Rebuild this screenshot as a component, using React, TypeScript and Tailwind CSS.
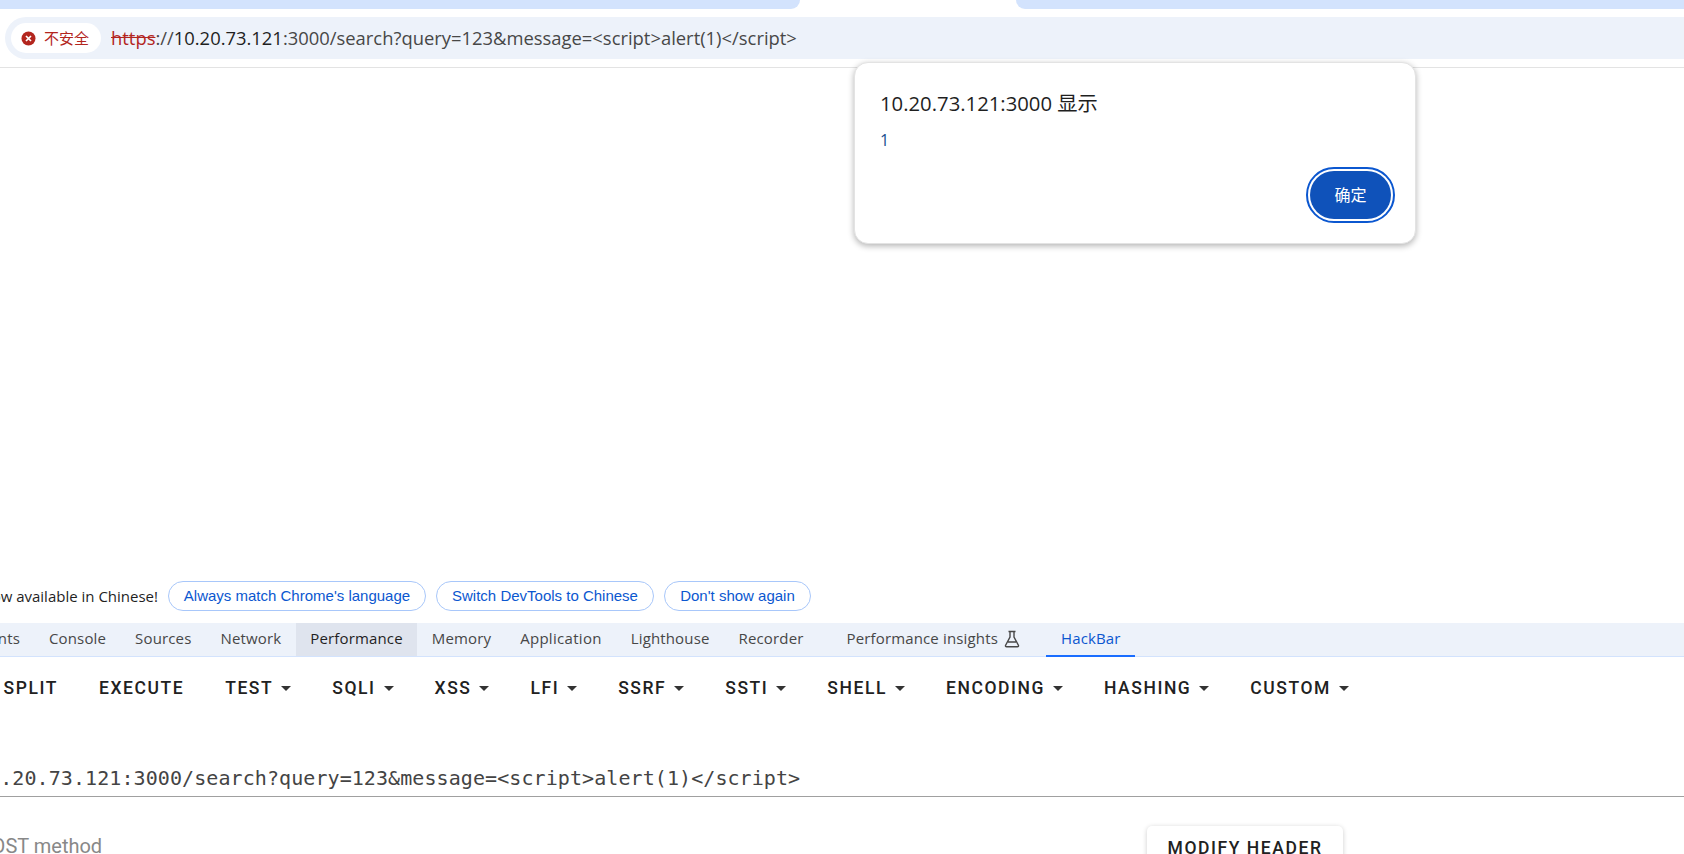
const devtoolsTabs = ["Console", "Sources", "Network", "Performance", "Memory", "Application", "Lighthouse", "Recorder"];

const hackbarMenus = ["TEST", "SQLI", "XSS", "LFI", "SSRF", "SSTI", "SHELL", "ENCODING", "HASHING", "CUSTOM"];

function Caret() {
  return <span className="ml-2 mr-px h-0 w-0 border-x-[5px] border-t-[5px] border-x-transparent border-t-[#333]" />;
}

function FlaskIcon() {
  return (
    <svg width="16" height="18" viewBox="0 0 16 18" fill="none" stroke="#474747" strokeWidth="1.4" className="ml-[6px]">
      <path d="M4.5 1.5h7M6 1.5v5.5L1.6 15.2c-.4.8.1 1.6 1 1.6h10.8c.9 0 1.4-.8 1-1.6L10 7V1.5M4 12h8" />
    </svg>
  );
}

export default function App() {
  return (
    <div className="flex h-[854px] w-[1684px] flex-col overflow-hidden bg-white font-['Open_Sans','Noto_Sans_CJK_SC',sans-serif]">
      {/* tab strip */}
      <div className="flex h-[9px] shrink-0 justify-between">
        <div className="h-full w-[800px] rounded-br-[10px] bg-[#d3e3fd]" />
        <div className="h-full w-[668px] rounded-bl-[10px] bg-[#d3e3fd]" />
      </div>

      {/* address bar */}
      <div className="mt-2 ml-[5px] flex h-[42px] shrink-0 items-center rounded-l-full bg-[#edf2fa] pl-[6px]">
        <div className="flex h-[30px] w-[90px] items-center rounded-full bg-white pl-[10px] text-[#b3261e]">
          <svg width="15" height="15" viewBox="0 0 15 15">
            <circle cx="7.5" cy="7.5" r="7" fill="#b3261e" />
            <path d="M5 5l5 5M10 5l-5 5" stroke="#fff" strokeWidth="1.7" />
          </svg>
          <span className="ml-2 text-[15px]">不安全</span>
        </div>
        <div className="ml-[10px] whitespace-nowrap text-[18.4px] text-[#474747]">
          <span className="text-[#b3261e] line-through">https</span>
          <span>:</span>
          <span>//</span>
          <span className="text-[#1f1f1f]">10.20.73.121</span>
          <span>:3000/search?query=123&amp;message=&lt;script&gt;alert(1)&lt;/script&gt;</span>
        </div>
      </div>
      <div className="mt-2 h-px shrink-0 bg-[#e3e3e3]" />

      {/* page */}
      <div className="h-[513px] shrink-0" />

      {/* language infobar */}
      <div className="flex h-[30px] shrink-0 items-center">
        <div className="flex w-[158px] justify-end overflow-hidden whitespace-nowrap text-[15px] text-[#1f1f1f]">
          DevTools is now available in Chinese!
        </div>
        <div className="ml-[10px] flex gap-[10px] font-['Liberation_Sans',sans-serif] text-[15px] text-[#0b57d0]">
          <button className="flex h-[30px] w-[258px] items-center justify-center rounded-full border border-[#a8c7fa]">Always match Chrome's language</button>
          <button className="flex h-[30px] w-[218px] items-center justify-center rounded-full border border-[#a8c7fa]">Switch DevTools to Chinese</button>
          <button className="flex h-[30px] w-[147px] items-center justify-center rounded-full border border-[#a8c7fa]">Don't show again</button>
        </div>
      </div>

      {/* devtools tabs */}
      <div className="mt-3 flex h-[34px] shrink-0 items-stretch border-b border-[#d3e3fd] bg-[#edf2fa] pb-[2px] text-[15px] tracking-[0.15px] text-[#474747]">
        <div className="flex w-[34.5px] items-center justify-end overflow-hidden whitespace-nowrap pr-[14.5px]">Elements</div>
        {devtoolsTabs.map((tab) => (
          <div
            key={tab}
            className={
              tab === "Performance"
                ? "-mb-[2px] flex items-center bg-[#dfe4ee] px-[14.5px] pb-[2px] text-[#1f1f1f]"
                : tab === "Application"
                  ? "flex items-center px-[14.5px] tracking-[0.3px]"
                  : "flex items-center px-[14.5px]"
            }
          >
            {tab}
          </div>
        ))}
        <div className="ml-[14px] flex items-center px-[14.5px]">
          Performance insights
          <FlaskIcon />
        </div>
        <div className="relative ml-[12px] flex items-center px-[14.5px] text-[#0b57d0]">
          HackBar
          <div className="absolute inset-x-0 -bottom-[3px] h-[2px] bg-[#1a6dff]" />
        </div>
      </div>

      {/* hackbar toolbar */}
      <div className="mt-[13px] flex h-[36px] shrink-0 items-center font-[Roboto,sans-serif] text-[17.5px] font-medium tracking-[1.56px] text-[#212121]">
        <div className="flex w-[79px] justify-end overflow-hidden pr-[21px]">SPLIT</div>
        <div className="mr-[1px] px-5">EXECUTE</div>
        {hackbarMenus.map((menu) => (
          <div key={menu} className="flex items-center px-5">
            {menu}
            <Caret />
          </div>
        ))}
      </div>

      {/* url field */}
      <div className="mt-[44px] h-[47px] shrink-0 overflow-hidden border-b border-[#a0a0a0]">
        <div className="-ml-[24px] whitespace-nowrap pt-[10px] font-['DejaVu_Sans_Mono',monospace] text-[20px] leading-[36px] tracking-[0.08px] text-[#444]">
          10.20.73.121:3000/search?query=123&amp;message=&lt;script&gt;alert(1)&lt;/script&gt;
        </div>
      </div>

      {/* post row */}
      <div className="relative flex h-[56px] shrink-0 items-start justify-between pt-[37px]">
        <div className="-ml-[21px] font-[Roboto,sans-serif] text-[20px] leading-[24px] text-[#888]">POST method</div>
        <button className="absolute left-[1147px] top-[29px] h-[45px] w-[196px] rounded-[5px] bg-white font-[Roboto,sans-serif] text-[17.5px] font-medium tracking-[1.56px] text-[#212121] shadow-[0_1px_5px_rgba(0,0,0,0.2)]">
          MODIFY HEADER
        </button>
      </div>

      {/* alert dialog */}
      <div className="absolute left-[854px] top-[62px] flex h-[182px] w-[562px] flex-col rounded-[14px] border border-[#e3e3e3] bg-white px-[25px] pt-[22px] shadow-[0_2px_6px_rgba(0,0,0,0.3)]">
        <div className="text-[20.3px] leading-[36px] text-[#1f1f1f]">10.20.73.121:3000 显示</div>
        <div className="mt-[9px] text-[16px] leading-[20px] text-[#1a4f8f]">1</div>
        <div className="flex justify-end">
          <div className="-mr-[5px] mt-[17px] rounded-[28px] border-2 border-[#0b57d0] p-[2px]">
            <button className="flex h-[48px] w-[81px] items-center justify-center rounded-[24px] bg-[#0f52ba] text-[16px] text-white">
              确定
            </button>
          </div>
        </div>
      </div>
    </div>
  );
}
